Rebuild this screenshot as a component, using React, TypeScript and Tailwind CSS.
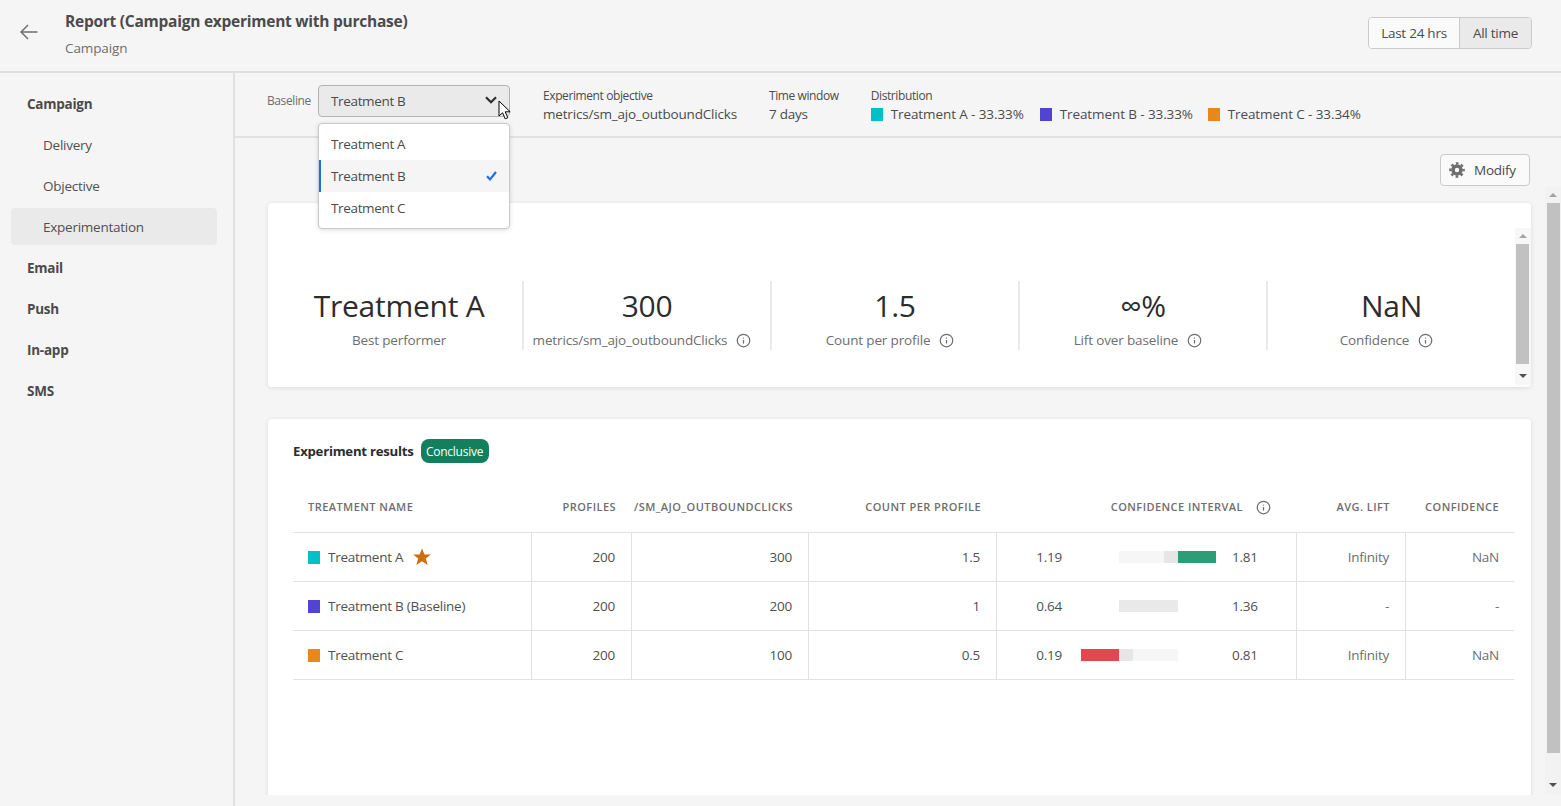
import React from "react";
import { Info } from "lucide-react";

function NavItem({ label, bold, sub, active }: { label: string; bold?: boolean; sub?: boolean; active?: boolean }) {
  return (
    <div
      className={`h-[37px] flex items-center rounded-[4px] ${sub ? "pl-[32px]" : "pl-[16px]"} ${
        bold ? "font-bold text-[#4b4b4b]" : "text-[#505050]"
      } ${active ? "bg-[#eaeaea] -mt-px mb-px pt-px" : ""}`}
    >
      {label}
    </div>
  );
}

function Swatch({ color, className = "" }: { color: string; className?: string }) {
  return <span className={`block w-[12px] h-[13px] shrink-0 ${className}`} style={{ backgroundColor: color }} />;
}

function Stat({ big, sub, info, last }: { big: string; sub: string; info?: boolean; last?: boolean }) {
  return (
    <div className={`h-[69px] flex flex-col items-center ${last ? "" : "border-r-2 border-[#eaeaea]"}`}>
      <div className="text-[30px] leading-[50px] h-[52px] text-[#2c2c2c]">{big}</div>
      <div className={`flex items-center text-[#6e6e6e] leading-[18px] mt-[-2px] tracking-[-0.15px] ${info ? "mr-[10px]" : ""}`}>
        <span>{sub}</span>
        {info && <Info size={15} strokeWidth={2} className="ml-[9px] text-[#6e6e6e]" />}
      </div>
    </div>
  );
}

function ScrollBar({ inner }: { inner?: boolean }) {
  return (
    <div className={`w-[16px] shrink-0 flex flex-col items-center ${inner ? "bg-[#f7f7f7]" : "bg-[#f2f2f2]"}`}>
      <div className="h-[16px] flex items-center justify-center shrink-0">
        <span className="border-x-[4px] border-x-transparent border-b-[4px] border-b-[#a3a3a3]" />
      </div>
      <div className={`w-[13px] flex-1 bg-[#c1c1c1] self-start ${inner ? "ml-[1px]" : "ml-[2px]"}`} />
      <div className={`flex items-end justify-center shrink-0 ${inner ? "h-[21px] pb-[7px]" : "h-[42px] pb-[8px]"}`}>
        <span className="border-x-[4px] border-x-transparent border-t-[4px] border-t-[#505050]" />
      </div>
    </div>
  );
}

const grid = "grid grid-cols-[239px_100px_177px_188px_300px_109px_109px]";

function Bar({ left, right, kind }: { left: string; right: string; kind: "a" | "b" | "c" }) {
  return (
    <div className="flex items-center h-full border-r border-[#e1e1e1]">
      <span className="w-[65px] text-right shrink-0">{left}</span>
      <div className="w-[135px] ml-[19px] h-[12px] flex shrink-0">
        {kind === "a" && (
          <>
            <span className="ml-[38px] w-[45px] bg-[#f6f6f6]" />
            <span className="w-[14px] bg-[#e6e6e6]" />
            <span className="w-[38px] bg-[#2d9d78]" />
          </>
        )}
        {kind === "b" && <span className="ml-[38px] w-[59px] bg-[#e9e9e9]" />}
        {kind === "c" && (
          <>
            <span className="w-[38px] bg-[#e34850]" />
            <span className="w-[14px] bg-[#e6e6e6]" />
            <span className="w-[45px] bg-[#f6f6f6]" />
          </>
        )}
      </div>
      <span className="ml-[16px]">{right}</span>
    </div>
  );
}

function Row({
  name,
  color,
  star,
  conv,
  count,
  low,
  high,
  kind,
  lift,
  conf,
  last,
}: {
  name: string;
  color: string;
  star?: boolean;
  conv: string;
  count: string;
  low: string;
  high: string;
  kind: "a" | "b" | "c";
  lift: string;
  conf: string;
  last?: boolean;
}) {
  const num = "flex items-center justify-end h-full pr-[16px] border-r border-[#e1e1e1]";
  return (
    <div className={`${grid} border-t border-[#e1e1e1] text-[#505050] ${last ? "h-[50px] border-b" : "h-[49px]"}`}>
      <div className="flex items-center h-full pl-[15px] border-r border-[#e1e1e1]">
        <Swatch color={color} />
        <span className="ml-[8px]">{name}</span>
        {star && (
          <svg width="18" height="18" viewBox="0 0 18 18" className="ml-[10px] mt-[-1px]">
            <path d="M9 0.5l2.5 6h6.4l-5.1 3.9 1.9 6.6L9 13.2 3.3 17l1.9-6.6L0.1 6.5h6.4z" fill="#cb6f10" />
          </svg>
        )}
      </div>
      <div className={num}>200</div>
      <div className={num}>{conv}</div>
      <div className={num}>{count}</div>
      <Bar left={low} right={high} kind={kind} />
      <div className={`${num} text-[#6e6e6e]`}>{lift}</div>
      <div className="flex items-center justify-end h-full pr-[16px] text-[#6e6e6e]">{conf}</div>
    </div>
  );
}

export default function App() {
  return (
    <div
      className="w-[1561px] h-[806px] overflow-hidden bg-[#f5f5f5] text-[13.5px] tracking-[-0.25px] text-[#4b4b4b] flex flex-col relative"
      style={{ fontFamily: '"Open Sans", "Noto Sans", sans-serif' }}
    >
      <header className="h-[73px] shrink-0 border-b-2 border-[#e1e1e1] flex items-start">
        <svg className="ml-[20px] mt-[24px]" width="18" height="16" viewBox="0 0 18 16" fill="none" stroke="#6e6e6e" strokeWidth="1.5">
          <path d="M17.5 8H1M8 1L1 8l7 7" />
        </svg>
        <div className="ml-[27px] flex-1">
          <div className="mt-[10px] text-[15.5px] leading-[22px] font-bold text-[#4b4b4b]">Report (Campaign experiment with purchase)</div>
          <div className="mt-[6px] leading-[20px] text-[#6e6e6e] tracking-[-0.1px]">Campaign</div>
        </div>
        <div className="mt-[17px] mr-[29px] h-[32px] flex border border-[#cacaca] rounded-[4px] overflow-hidden">
          <div className="w-[91px] flex items-center justify-center bg-[#fafafa] border-r border-[#cacaca]">Last 24 hrs</div>
          <div className="w-[71px] flex items-center justify-center bg-[#eaeaea]">All time</div>
        </div>
      </header>

      <div className="flex flex-1 min-h-0">
        <aside className="w-[235px] shrink-0 border-r-2 border-[#e1e1e1] pt-[13px] pl-[11px] pr-[16px] flex flex-col gap-[4px]">
          <NavItem label="Campaign" bold />
          <NavItem label="Delivery" sub />
          <NavItem label="Objective" sub />
          <NavItem label="Experimentation" sub active />
          <NavItem label="Email" bold />
          <NavItem label="Push" bold />
          <NavItem label="In-app" bold />
          <NavItem label="SMS" bold />
        </aside>

        <main className="flex-1 min-w-0 flex flex-col">
          <div className="h-[65px] shrink-0 border-b-2 border-[#e1e1e1] flex items-start pl-[32px] relative">
            <span className="mt-[19px] text-[12px] leading-[18px] text-[#6e6e6e] w-[51px] tracking-[-0.4px]">Baseline</span>
            <div className="mt-[12px] w-[192px] h-[32px] bg-[#eaeaea] border border-[#b3b3b3] rounded-[4px] flex items-center justify-between pl-[12px] pr-[12px] tracking-[-0.35px]">
              <span>Treatment B</span>
              <svg width="12" height="8" viewBox="0 0 12 8" fill="none" stroke="#2c2c2c" strokeWidth="2.2" className="mt-[-2px]">
                <path d="M1 1.2l5 5 5-5" />
              </svg>
            </div>
            <div className="ml-[33px] mt-[14px]">
              <div className="text-[12px] leading-[18px] tracking-[-0.4px]">Experiment objective</div>
              <div className="leading-[20px] mt-[-1px] tracking-[-0.18px]">metrics/sm_ajo_outboundClicks</div>
            </div>
            <div className="ml-[32px] mt-[14px]">
              <div className="text-[12px] leading-[18px] tracking-[-0.4px]">Time window</div>
              <div className="leading-[20px] mt-[-1px]">7 days</div>
            </div>
            <div className="ml-[32px] mt-[14px]">
              <div className="text-[12px] leading-[18px] tracking-[-0.4px]">Distribution</div>
              <div className="flex items-center leading-[20px] mt-[-1px] tracking-[-0.1px]">
                <Swatch color="#00c0c7" />
                <span className="ml-[8px] w-[149px]">Treatment A - 33.33%</span>
                <Swatch color="#5144d3" />
                <span className="ml-[8px] w-[148px]">Treatment B - 33.33%</span>
                <Swatch color="#e8871a" />
                <span className="ml-[8px]">Treatment C - 33.34%</span>
              </div>
            </div>

            <div className="absolute left-[83px] top-[50px] w-[192px] h-[106px] bg-white border border-[#cacaca] rounded-[4px] shadow-[0_1px_4px_rgba(0,0,0,0.15)] pt-[4px] z-10 tracking-[-0.35px]">
              <div className="h-[32px] flex items-center pl-[12px]">Treatment A</div>
              <div className="h-[32px] flex items-center justify-between pl-[10px] pr-[12px] bg-[#f5f5f5] border-l-2 border-[#1473e6]">
                <span>Treatment B</span>
                <svg width="11" height="10" viewBox="0 0 11 10" fill="none" stroke="#1473e6" strokeWidth="2.2">
                  <path d="M1 5.2l3 3.2L10 1" />
                </svg>
              </div>
              <div className="h-[32px] flex items-center pl-[12px]">Treatment C</div>
            </div>
            <svg className="absolute left-[263px] top-[27px] z-20" width="14" height="20" viewBox="0 0 14 20">
              <path d="M1 1v15l3.6-3.2 2.6 6 2.6-1.1-2.6-5.9h5z" fill="#fff" stroke="#000" strokeWidth="1" />
            </svg>
          </div>

          <div className="h-[49px] shrink-0 flex justify-end pt-[16px] pr-[31px]">
            <div className="w-[90px] h-[32px] border border-[#cacaca] bg-[#fafafa] rounded-[4px] flex items-center pl-[8px]">
              <svg width="16" height="16" viewBox="0 0 16 16" fill="none" stroke="#6e6e6e">
                <circle cx="8" cy="8" r="4" strokeWidth="3.6" />
                <circle cx="8" cy="8" r="6.6" strokeWidth="2.4" strokeDasharray="2.6 2.58" strokeDashoffset="1.3" />
              </svg>
              <span className="ml-[9px]">Modify</span>
            </div>
          </div>

          <div className="h-[608px] shrink-0 flex">
            <div className="flex-1 min-w-0 overflow-hidden pl-[33px] pr-[14px] pt-[16px]">
              <section className="h-[184px] bg-white rounded-[4px] shadow-[0_1px_5px_rgba(0,0,0,0.1)] flex">
                <div className="flex-1 min-w-0 pt-[78px] pl-[8px]">
                  <div className="grid grid-cols-[248px_248px_248px_248px_247px]">
                    <Stat big="Treatment A" sub="Best performer" />
                    <Stat big="300" sub="metrics/sm_ajo_outboundClicks" info />
                    <Stat big="1.5" sub="Count per profile" info />
                    <Stat big="∞%" sub="Lift over baseline" info />
                    <Stat big="NaN" sub="Confidence" info last />
                  </div>
                </div>
                <div className="flex flex-col pt-[25px] pb-[2px]">
                  <div className="flex-1 flex min-h-0"><ScrollBar inner /></div>
                </div>
              </section>

              <section className="mt-[32px] h-[500px] bg-white rounded-[4px] shadow-[0_1px_5px_rgba(0,0,0,0.1)] pt-[20px] pl-[25px] pr-[17px]">
                <div className="flex items-center h-[24px]">
                  <span className="font-bold text-[#2c2c2c] text-[13.2px] pt-[1px]">Experiment results</span>
                  <span className="ml-[7px] h-[24px] w-[68px] rounded-[8px] bg-[#12805c] text-white text-[12px] flex items-center justify-center pt-[1px]">Conclusive</span>
                </div>
                <div className={`${grid} mt-[19px] h-[50px] items-center text-[11px] tracking-[0.45px] font-semibold uppercase text-[#6e6e6e]`}>
                  <span className="pl-[15px]">Treatment name</span>
                  <span className="text-right pr-[16px]">Profiles</span>
                  <span className="text-right pr-[16px] whitespace-nowrap">/sm_ajo_outboundClicks</span>
                  <span className="text-right pr-[16px]">Count per profile</span>
                  <span className="flex items-center justify-end pr-[26px]">
                    Confidence interval
                    <Info size={15} strokeWidth={2} className="ml-[13px]" />
                  </span>
                  <span className="text-right pr-[16px]">Avg. lift</span>
                  <span className="text-right pr-[16px]">Confidence</span>
                </div>
                <Row name="Treatment A" color="#00c0c7" star conv="300" count="1.5" low="1.19" high="1.81" kind="a" lift="Infinity" conf="NaN" />
                <Row name="Treatment B (Baseline)" color="#5144d3" conv="200" count="1" low="0.64" high="1.36" kind="b" lift="-" conf="-" />
                <Row name="Treatment C" color="#e8871a" conv="100" count="0.5" low="0.19" high="0.81" kind="c" lift="Infinity" conf="NaN" last />
              </section>
            </div>
            <ScrollBar />
          </div>
        </main>
      </div>
    </div>
  );
}
